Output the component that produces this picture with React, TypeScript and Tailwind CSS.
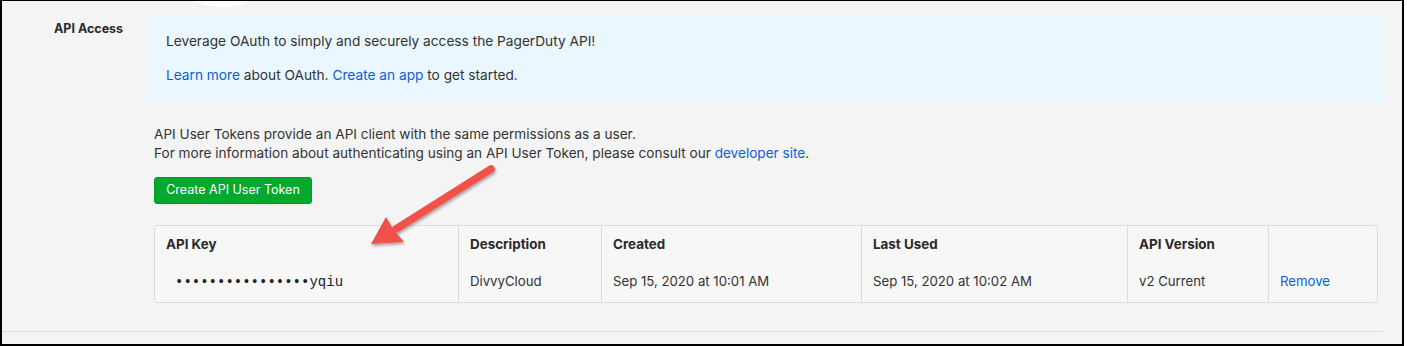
import React from 'react';

const font = { fontFamily: 'Inter, "Liberation Sans", sans-serif' };

interface TokenRow {
  apiKey: string;
  description: string;
  created: string;
  lastUsed: string;
  version: string;
}

const columns = ['API Key', 'Description', 'Created', 'Last Used', 'API Version', ''];

const rows: TokenRow[] = [
  {
    apiKey: '••••••••••••••••yqiu',
    description: 'DivvyCloud',
    created: 'Sep 15, 2020 at 10:01 AM',
    lastUsed: 'Sep 15, 2020 at 10:02 AM',
    version: 'v2 Current',
  },
];

function Arrow() {
  return (
    <svg
      className="absolute left-0 top-0 pointer-events-none"
      width="1404"
      height="346"
      viewBox="0 0 1404 346"
    >
      <defs>
        <filter id="arrowShadow" x="-20%" y="-20%" width="140%" height="140%">
          <feDropShadow dx="1" dy="2" stdDeviation="1.5" floodColor="#000" floodOpacity="0.35" />
        </filter>
      </defs>
      <g filter="url(#arrowShadow)" transform="translate(-2,-1)">
        <line x1="491" y1="169" x2="396" y2="229" stroke="#f05149" strokeWidth="7.5" strokeLinecap="round" />
        <path d="M371 244 L386 217 L393 229 L404 242 Z" fill="#f05149" />
      </g>
    </svg>
  );
}

export default function App() {
  return (
    <div className="w-[1407px] h-[346px] bg-white" style={font}>
      <div className="relative w-[1404px] h-[346px] border-t border-x-2 border-b-2 border-black bg-[#f4f4f4] overflow-hidden text-[#333]">
        <div className="absolute left-[186px] top-[-26px] w-[68px] h-[32px] rounded-[50%] bg-white"></div>

        <div className="flex pt-[13px] pr-[19px]">
          <div className="w-[146px] shrink-0 pl-[52px] pt-[6px] text-[12.5px] font-bold text-[#2a2a2a]">
            API Access
          </div>

          <div className="flex-1">
            <div className="bg-[#eaf7fe] rounded-[3px] pl-[18px] pt-[17px] pb-[18px] text-[13.7px] leading-[20px]">
              <p className="mb-[14px]">Leverage OAuth to simply and securely access the PagerDuty API!</p>
              <p>
                <a className="text-[#0c5fd8]">Learn more</a> about OAuth.{' '}
                <a className="text-[#0c5fd8]">Create an app</a> to get started.
              </p>
            </div>

            <div className="pl-[6px] pr-[5px] pt-[22px]">
              <p className="text-[13.6px] leading-[19px]">
                API User Tokens provide an API client with the same permissions as a user.
                <br />
                For more information about authenticating using an API User Token, please consult our{' '}
                <a className="text-[#0c5fd8]">developer site</a>.
              </p>

              <button className="mt-[14px] h-[27px] w-[158px] rounded-[3px] bg-[#03a92e] border border-[#029a29] text-white text-[12.5px]">
                Create API User Token
              </button>

              <div className="mt-[21px] border border-[#dcdcdc] rounded-[3px] bg-[#f7f7f7] grid grid-cols-[303px_143px_260px_266px_141px_1fr]">
                {columns.map((c, i) => (
                  <div
                    key={c + i}
                    className={`h-[36px] flex items-center pl-[11px] text-[13.4px] font-bold text-[#2a2a2a] ${
                      i > 0 ? 'border-l border-[#dcdcdc]' : ''
                    }`}
                  >
                    {c}
                  </div>
                ))}
                {rows.map((r) => (
                  <React.Fragment key={r.apiKey}>
                    <div
                      className="h-[40px] flex items-center pl-[20px] text-[14px] text-[#222]"
                      style={{ fontFamily: '"Liberation Mono", "DejaVu Sans Mono", monospace' }}
                    >
                      {r.apiKey}
                    </div>
                    <div className="h-[40px] flex items-center pl-[11px] text-[13.2px] border-l border-[#dcdcdc]">
                      {r.description}
                    </div>
                    <div className="h-[40px] flex items-center pl-[11px] text-[13.2px] border-l border-[#dcdcdc]">
                      {r.created}
                    </div>
                    <div className="h-[40px] flex items-center pl-[11px] text-[13.2px] border-l border-[#dcdcdc]">
                      {r.lastUsed}
                    </div>
                    <div className="h-[40px] flex items-center pl-[11px] text-[13.2px] border-l border-[#dcdcdc]">
                      {r.version}
                    </div>
                    <div className="h-[40px] flex items-center pl-[11px] text-[13.2px] border-l border-[#dcdcdc] text-[#0c5fd8]">
                      Remove
                    </div>
                  </React.Fragment>
                ))}
              </div>
            </div>
          </div>
        </div>

        <div className="mt-[28px] mr-[19px] h-px bg-[#dddddd]"></div>

        <Arrow />
      </div>
    </div>
  );
}
